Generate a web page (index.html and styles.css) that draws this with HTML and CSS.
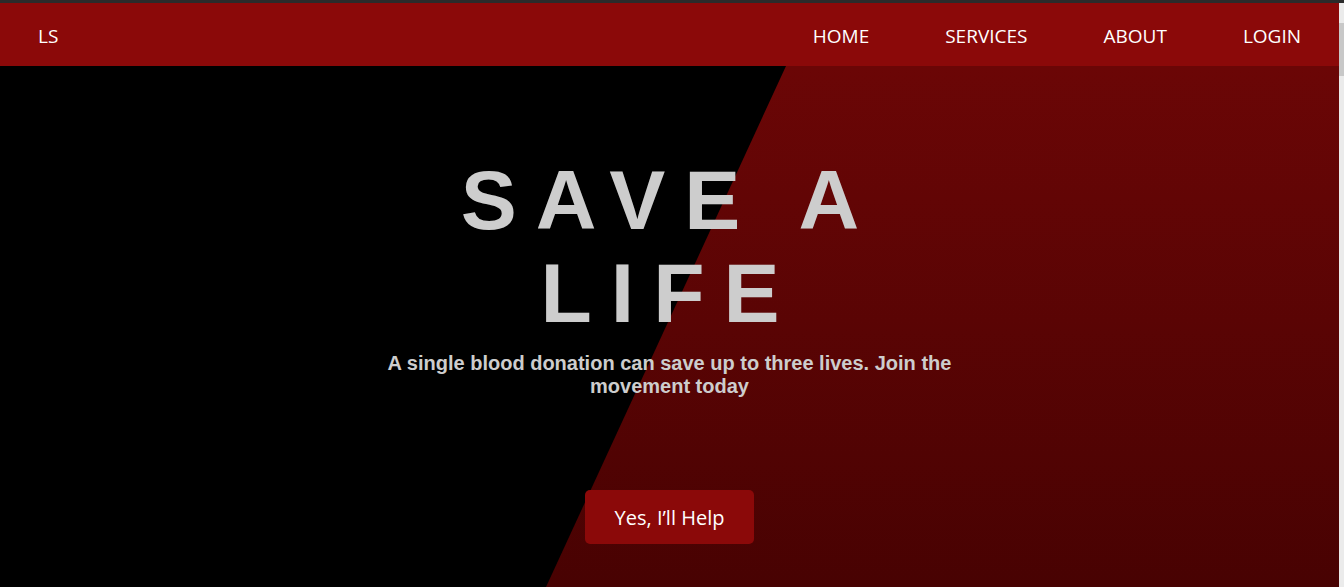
FILE: index.html
```html
<!DOCTYPE html>
<html lang="en">
<head>
<meta charset="utf-8">
<title>Save a Life</title>
<link rel="stylesheet" href="styles.css">
</head>
<body>
<div class="topbar"></div>
<div class="frame">
  <div class="page">
    <header class="nav">
      <div class="logo">LS</div>
      <nav class="links">
        <a href="#">HOME</a>
        <a href="#">SERVICES</a>
        <a href="#">ABOUT</a>
        <a href="#">LOGIN</a>
      </nav>
    </header>
    <section class="hero">
      <div class="hero-content">
        <h1 class="title">SAVE A LIFE</h1>
        <p class="subtitle">A single blood donation can save up to three lives. Join the movement today</p>
        <a class="btn" href="#">Yes, I’ll Help</a>
      </div>
    </section>
  </div>
  <div class="scrollbar"><div class="thumb"></div></div>
</div>
</body>
</html>
```
FILE: styles.css
```css
* { box-sizing: border-box; }
html, body { margin: 0; padding: 0; }
body {
  height: 587px;
  overflow: hidden;
  background: #000;
  display: flex;
  flex-direction: column;
}
.topbar {
  height: 3px;
  background: #2b2b2b;
  flex: none;
}
.frame {
  flex: 1;
  display: flex;
  min-height: 0;
}
.page {
  flex: 1;
  display: flex;
  flex-direction: column;
  min-width: 0;
}
.scrollbar {
  width: 5px;
  flex: none;
  background: #ebebeb;
  padding-top: 20px;
}
.thumb {
  height: 53px;
  background: #c8c8c8;
}
.nav {
  height: 63px;
  flex: none;
  background: #8b0909;
  display: flex;
  align-items: center;
  justify-content: space-between;
  padding: 4px 38px 0;
  font-family: "Open Sans", "Noto Sans", sans-serif;
  font-size: 19px;
  color: #fff;
}
.logo { line-height: 1; }
.links {
  display: flex;
  gap: 76px;
}
.links a {
  color: #fff;
  text-decoration: none;
  line-height: 1;
}
.hero {
  flex: 1;
  position: relative;
  background: linear-gradient(to bottom, #6b0606, #480202);
  overflow: hidden;
}
.hero::before {
  content: "";
  position: absolute;
  inset: 0;
  background: #000;
  clip-path: polygon(0 0, 786px 0, 546px 100%, 0 100%);
}
.hero-content {
  position: relative;
  width: 600px;
  margin: 0 auto;
  padding-top: 88px;
  display: flex;
  flex-direction: column;
  align-items: center;
  text-align: center;
}
.title {
  margin: 0;
  font-family: "Liberation Sans", Arial, sans-serif;
  font-weight: 700;
  font-size: 84px;
  line-height: 93px;
  letter-spacing: 19px;
  color: #cdcdcd;
}
.subtitle {
  margin: 12px 0 0;
  font-family: "Liberation Sans", Arial, sans-serif;
  font-weight: 700;
  font-size: 20px;
  line-height: 23px;
  color: #cdcdcd;
}
.btn {
  margin-top: 92px;
  width: 169px;
  height: 54px;
  display: flex;
  align-items: center;
  justify-content: center;
  background: #8b0909;
  border-radius: 5px;
  color: #fff;
  text-decoration: none;
  font-family: "Open Sans", "Noto Sans", sans-serif;
  font-size: 20px;
}
```
